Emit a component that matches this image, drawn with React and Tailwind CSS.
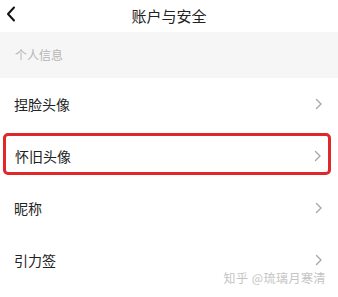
import React from 'react';

const font = { fontFamily: '"Noto Sans CJK SC", "Noto Sans", sans-serif' };

const Chevron = () => (
  <svg width="8" height="12" viewBox="0 0 8 12" fill="none" className="shrink-0">
    <path d="M1.5 1.5 L6 6 L1.5 10.5" stroke="#a8a8a8" strokeWidth="1.4" strokeLinecap="round" strokeLinejoin="round" />
  </svg>
);

const Row = ({ label }) => (
  <div className="h-[52px] flex items-center justify-between pl-[14px] pr-[15px] bg-white">
    <span className="text-[14px] text-[#222]">{label}</span>
    <Chevron />
  </div>
);

export default function App() {
  return (
    <div className="relative w-[338px] h-[297px] bg-white overflow-hidden" style={font}>
      {/* Header */}
      <div className="relative h-8 flex items-center justify-center">
        <svg width="10" height="16" viewBox="0 0 10 16" className="absolute left-[6px] top-[6px]" fill="none">
          <path d="M8 1.5 L2 8 L8 14.5" stroke="#111" strokeWidth="2" strokeLinecap="round" strokeLinejoin="round" />
        </svg>
        <span className="text-[15px] text-[#222]">账户与安全</span>
      </div>

      {/* Section label */}
      <div className="h-[46px] bg-[#f6f6f6] flex items-center px-[15px]">
        <span className="text-[12px] text-[#b5b5b5]">个人信息</span>
      </div>

      <Row label="捏脸头像" />

      {/* Highlighted row */}
      <div className="h-[52px] pt-[3px] pb-[7px] pl-[3px] pr-[7px]">
        <div className="h-full flex items-center justify-between border-[3px] border-[#e0272a] rounded-[5px] pl-[9px] pr-[6px] pt-1">
          <span className="text-[14px] text-[#222]">怀旧头像</span>
          <Chevron />
        </div>
      </div>

      <Row label="昵称" />
      <Row label="引力签" />

      {/* Watermark */}
      <div className="absolute right-[12px] top-[269px] text-[12px] text-[#c4c4c4] tracking-[0.5px]">
        知乎 @琉璃月寒清
      </div>
    </div>
  );
}
